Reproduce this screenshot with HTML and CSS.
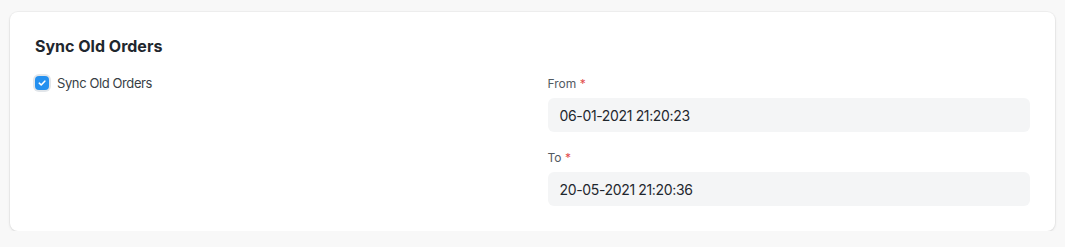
FILE: index.html
```html
<!DOCTYPE html>
<html>
<head>
<meta charset="utf-8">
<link rel="stylesheet" href="styles.css">
</head>
<body>
<div class="page">
  <div class="card">
    <h3 class="title">Sync Old Orders</h3>
    <div class="grid">
      <div class="col">
        <label class="check">
          <span class="box">
            <svg width="10" height="10" viewBox="0 0 10 10"><path d="M2.3 5.2 L4.2 7 L7.8 3.2" fill="none" stroke="#fff" stroke-width="1.6" stroke-linecap="round" stroke-linejoin="round"/></svg>
          </span>
          <span class="check-label">Sync Old Orders</span>
        </label>
      </div>
      <div class="col col-right">
        <div class="field">
          <div class="label">From <span class="req">*</span></div>
          <div class="input">06-01-2021 21:20:23</div>
        </div>
        <div class="field">
          <div class="label">To <span class="req">*</span></div>
          <div class="input">20-05-2021 21:20:36</div>
        </div>
      </div>
    </div>
  </div>
</div>
</body>
</html>
```
FILE: styles.css
```css
* { box-sizing: border-box; }
html, body { margin: 0; padding: 0; }
body {
  background: #f8f8f8;
  font-family: Inter, "Noto Sans", sans-serif;
  color: #1f272e;
}
.page { padding: 12px 10px 0 10px; }
.card {
  background: #fff;
  border-radius: 8px;
  box-shadow: 0 0 0 1px rgba(0,0,0,0.03), 0 1px 3px rgba(0,0,0,0.1);
  padding: 24px 25px 26px 25px;
  height: 219px;
}
.title {
  margin: 0;
  font-size: 16px;
  font-weight: 700;
  line-height: 20px;
  color: #1f272e;
}
.grid {
  display: grid;
  grid-template-columns: 1fr 1fr;
  column-gap: 30px;
  margin-top: 18px;
}
.check {
  display: flex;
  align-items: center;
  gap: 8px;
  margin-top: 1px;
}
.box {
  width: 14px;
  height: 14px;
  border-radius: 4px;
  background: #2490ef;
  box-shadow: 0 0 0 2px #e2e6ea;
  display: flex;
  align-items: center;
  justify-content: center;
}
.check-label {
  font-size: 13px;
  letter-spacing: -0.4px;
  color: #383f45;
  line-height: 16px;
}
.col-right { padding-top: 2px; }
.field { margin-bottom: 18px; }
.label {
  font-size: 12px;
  line-height: 16px;
  color: #525a62;
  margin-bottom: 6px;
}
.req { color: #e24c4c; }
.input {
  background: #f4f5f6;
  border-radius: 6px;
  height: 34px;
  padding: 0 12px;
  display: flex;
  align-items: center;
  font-size: 14px;
  letter-spacing: -0.35px;
  color: #1f272e;
}
```
